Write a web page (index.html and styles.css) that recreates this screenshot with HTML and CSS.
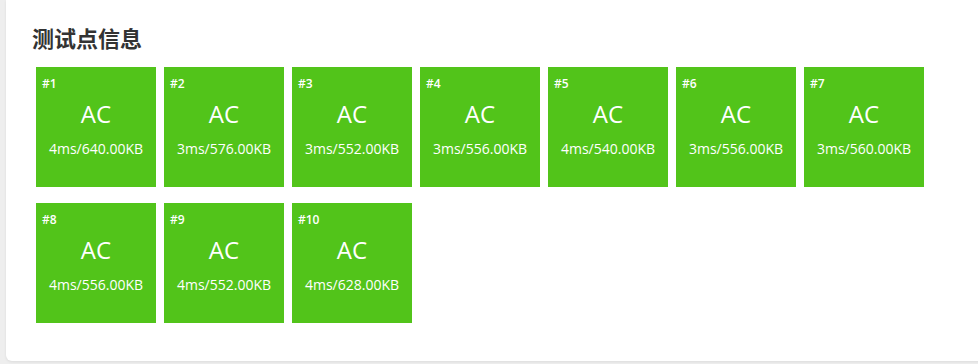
FILE: index.html
```html
<!DOCTYPE html>
<html lang="zh-CN">
<head>
  <meta charset="UTF-8">
  <meta name="viewport" content="width=device-width, initial-scale=1.0">
  <title>测试点信息</title>
  <link rel="stylesheet" href="styles.css">
</head>
<body>
  <div class="card">
    <h2 class="card-title">测试点信息</h2>
    <ul class="cases">
      <li class="case"><span class="case-no">#1</span><span class="case-res">AC</span><span class="case-info">4ms/640.00KB</span></li>
      <li class="case"><span class="case-no">#2</span><span class="case-res">AC</span><span class="case-info">3ms/576.00KB</span></li>
      <li class="case"><span class="case-no">#3</span><span class="case-res">AC</span><span class="case-info">3ms/552.00KB</span></li>
      <li class="case"><span class="case-no">#4</span><span class="case-res">AC</span><span class="case-info">3ms/556.00KB</span></li>
      <li class="case"><span class="case-no">#5</span><span class="case-res">AC</span><span class="case-info">4ms/540.00KB</span></li>
      <li class="case"><span class="case-no">#6</span><span class="case-res">AC</span><span class="case-info">3ms/556.00KB</span></li>
      <li class="case"><span class="case-no">#7</span><span class="case-res">AC</span><span class="case-info">3ms/560.00KB</span></li>
      <li class="case"><span class="case-no">#8</span><span class="case-res">AC</span><span class="case-info">4ms/556.00KB</span></li>
      <li class="case"><span class="case-no">#9</span><span class="case-res">AC</span><span class="case-info">4ms/552.00KB</span></li>
      <li class="case"><span class="case-no">#10</span><span class="case-res">AC</span><span class="case-info">4ms/628.00KB</span></li>
    </ul>
  </div>
</body>
</html>
```

FILE: styles.css
```css
* {
  padding: 0;
  margin: 0;
  box-sizing: border-box;
}
html,body {
  width: 100%;
  height: 100%;
}
body {
  background-color: #eeeeee;
  font-family: "Open Sans", "Noto Sans CJK SC", sans-serif;
  padding: 0 0 3px 6px;
  overflow: hidden;
}
ul {
  list-style: none;
}
.card {
  width: 980px;
  height: 361px;
  background-color: #fff;
  border-radius: 0 0 6px 6px;
  box-shadow: 0 1px 3px rgba(0, 0, 0, 0.08);
  padding: 22px 26px;
}
.card-title {
  font-size: 22px;
  line-height: 30px;
  font-weight: bold;
  color: #333;
  font-family: "Noto Sans CJK SC", sans-serif;
}
.cases {
  display: flex;
  flex-wrap: wrap;
  gap: 16px 8px;
  margin: 15px 4px 0;
  width: 900px;
}
.case {
  width: 120px;
  height: 120px;
  background-color: #52c41a;
  color: #fff;
  display: flex;
  flex-direction: column;
  align-items: center;
  padding: 8px 6px 0;
}
.case-no {
  align-self: flex-start;
  font-size: 12px;
  line-height: 18px;
  font-weight: 600;
}
.case-res {
  font-size: 24px;
  line-height: 30px;
  margin-top: 6px;
}
.case-info {
  font-size: 14px;
  line-height: 20px;
  margin-top: 10px;
}
```
